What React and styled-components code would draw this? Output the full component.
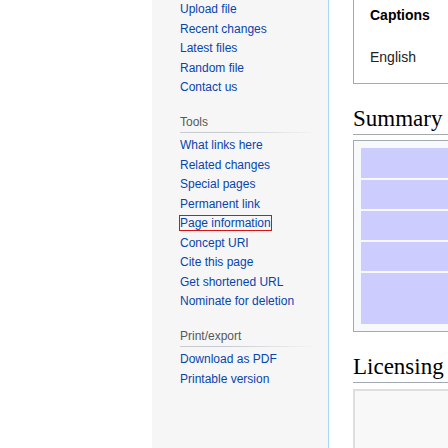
import React from 'react';
import styled, { createGlobalStyle } from 'styled-components';

const GlobalStyle = createGlobalStyle`
  html, body {
    margin: 0;
    padding: 0;
    width: 448px;
    height: 448px;
    overflow: hidden;
    background: #ffffff;
  }
`;

const Page = styled.div`
  display: grid;
  grid-template-columns: 152px 176px 640px;
  height: 448px;
  font-family: 'Liberation Sans', Arial, sans-serif;
`;

const Gutter = styled.div`
  background: #ffffff;
`;

const Sidebar = styled.div`
  background: #f6f6f6;
  padding: 0 10px 0 28px;
`;

const Portal = styled.nav`
  & + & {
    margin-top: 15.5px;
  }
`;

const PortalHeading = styled.h3`
  margin: 0;
  padding: 3px 0;
  font-size: 12px;
  font-weight: normal;
  line-height: 13.5px;
  color: #54595d;
  background-image: linear-gradient(
    to right,
    #c8ccd1 0%,
    #c8ccd1 35%,
    rgba(200, 204, 209, 0) 100%
  );
  background-repeat: no-repeat;
  background-position: bottom left;
  background-size: 100% 1px;
`;

const LinkList = styled.ul`
  list-style: none;
  margin: 0;
  padding: ${(p) => (p.$first ? '0' : '3.5px')} 0 0;
`;

const LinkItem = styled.li`
  padding: 3px 0;
  font-size: 12px;
  line-height: 13.5px;
  white-space: nowrap;
`;

const Link = styled.a`
  color: #0645ad;
  text-decoration: none;
  outline: ${(p) => (p.$focused ? '1px solid #dd1111' : 'none')};
`;

const Content = styled.main`
  border-left: 1px solid #a7d7f9;
  padding: 0 0 0 24px;
  color: #202122;
`;

const CaptionsBox = styled.section`
  border: 1px solid #a2a9b1;
  border-top: none;
  padding: 5px 16px 16px 16px;
  font-size: 14px;
  line-height: 20px;
`;

const CaptionsTitle = styled.div`
  font-weight: bold;
  color: #000000;
`;

const CaptionsLang = styled.div`
  margin-top: 22px;
`;

const SectionHeading = styled.h2`
  margin: 20px 0 0;
  padding: 0;
  font-family: 'Liberation Serif', 'Times New Roman', serif;
  font-size: 23px;
  font-weight: normal;
  line-height: 30px;
  color: #000000;
  border-bottom: 1px solid #a2a9b1;
`;

const InfoBox = styled.div`
  margin-top: 5px;
  border: 1px solid #a2a9b1;
  background: #f8f9fa;
  padding: 5px;
`;

const InfoTable = styled.table`
  width: 100%;
  border-spacing: 2px;
`;

const LabelCell = styled.td`
  width: 140px;
  height: ${(p) => p.$h}px;
  padding: 0;
  background: #ccccff;
`;

const ValueCell = styled.td`
  padding: 0;
`;

const LicenseBox = styled.div`
  margin-top: 6px;
  height: 120px;
  border: 2px solid #dedede;
  background: #f8f8f8;
`;

const navLinks = ['Upload file', 'Recent changes', 'Latest files', 'Random file', 'Contact us'];
const toolLinks = [
  'What links here',
  'Related changes',
  'Special pages',
  'Permanent link',
  'Page information',
  'Concept URI',
  'Cite this page',
  'Get shortened URL',
  'Nominate for deletion',
];
const printLinks = ['Download as PDF', 'Printable version'];
const rowHeights = [30, 29, 29, 29, 51];

const Links = ({ items, first }) => (
  <LinkList $first={first}>
    {items.map((label) => (
      <LinkItem key={label}>
        <Link href="#" $focused={label === 'Page information'}>
          {label}
        </Link>
      </LinkItem>
    ))}
  </LinkList>
);

export default function App() {
  return (
    <>
      <GlobalStyle />
      <Page>
        <Gutter />
        <Sidebar>
          <Portal>
            <Links items={navLinks} first />
          </Portal>
          <Portal>
            <PortalHeading>Tools</PortalHeading>
            <Links items={toolLinks} />
          </Portal>
          <Portal>
            <PortalHeading>Print/export</PortalHeading>
            <Links items={printLinks} />
          </Portal>
        </Sidebar>
        <Content>
          <CaptionsBox>
            <CaptionsTitle>Captions</CaptionsTitle>
            <CaptionsLang>English</CaptionsLang>
          </CaptionsBox>
          <SectionHeading>Summary</SectionHeading>
          <InfoBox>
            <InfoTable>
              <tbody>
                {rowHeights.map((h, i) => (
                  <tr key={i}>
                    <LabelCell $h={h} />
                    <ValueCell />
                  </tr>
                ))}
              </tbody>
            </InfoTable>
          </InfoBox>
          <SectionHeading>Licensing</SectionHeading>
          <LicenseBox />
        </Content>
      </Page>
    </>
  );
}
